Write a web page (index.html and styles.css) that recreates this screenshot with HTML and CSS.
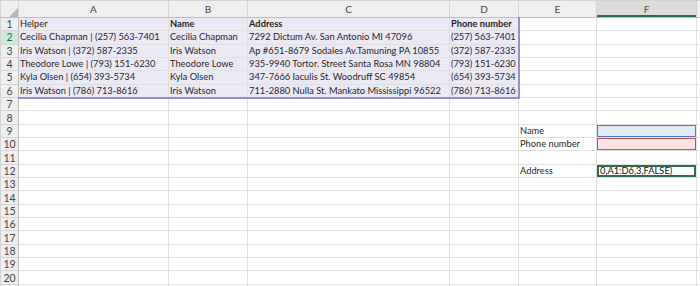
FILE: index.html
```html
<!DOCTYPE html>
<html lang="en">

<head>
    <meta charset="UTF-8">
    <title>Lookup sheet</title>
    <link rel="stylesheet" href="styles.css">
</head>

<body>
    <table class="sheet">
        <colgroup>
            <col class="col-hd">
            <col class="col-a">
            <col class="col-b">
            <col class="col-c">
            <col class="col-d">
            <col class="col-e">
            <col class="col-f">
            <col class="col-g">
        </colgroup>
        <thead>
            <tr>
                <th class="corner"><svg width="10" height="10" viewBox="0 0 10 10"><polygon points="10,1 10,10 1,10" fill="#b9b9b9"/></svg></th>
                <th>A</th>
                <th>B</th>
                <th>C</th>
                <th>D</th>
                <th>E</th>
                <th class="sel">F</th>
                <th></th>
            </tr>
        </thead>
        <tbody>
            <tr>
                <th>1</th>
                <td class="ref">Helper</td>
                <td class="ref bold">Name</td>
                <td class="ref bold">Address</td>
                <td class="ref bold edge-r">Phone number</td>
                <td></td><td></td><td></td>
            </tr>
            <tr>
                <th class="sel">2</th>
                <td class="ref">Cecilia Chapman | (257) 563-7401</td>
                <td class="ref">Cecilia Chapman</td>
                <td class="ref">7292 Dictum Av. San Antonio MI 47096</td>
                <td class="ref edge-r">(257) 563-7401</td>
                <td></td><td></td><td></td>
            </tr>
            <tr>
                <th>3</th>
                <td class="ref">Iris Watson | (372) 587-2335</td>
                <td class="ref">Iris Watson</td>
                <td class="ref">Ap #651-8679 Sodales Av.Tamuning PA 10855</td>
                <td class="ref edge-r">(372) 587-2335</td>
                <td></td><td></td><td></td>
            </tr>
            <tr>
                <th>4</th>
                <td class="ref">Theodore Lowe | (793) 151-6230</td>
                <td class="ref">Theodore Lowe</td>
                <td class="ref">935-9940 Tortor. Street Santa Rosa MN 98804</td>
                <td class="ref edge-r">(793) 151-6230</td>
                <td></td><td></td><td></td>
            </tr>
            <tr>
                <th>5</th>
                <td class="ref">Kyla Olsen | (654) 393-5734</td>
                <td class="ref">Kyla Olsen</td>
                <td class="ref">347-7666 Iaculis St. Woodruff SC 49854</td>
                <td class="ref edge-r">(654) 393-5734</td>
                <td></td><td></td><td></td>
            </tr>
            <tr>
                <th>6</th>
                <td class="ref edge-b">Iris Watson | (786) 713-8616</td>
                <td class="ref edge-b">Iris Watson</td>
                <td class="ref edge-b">711-2880 Nulla St. Mankato Mississippi 96522</td>
                <td class="ref edge-b edge-r">(786) 713-8616</td>
                <td></td><td></td><td></td>
            </tr>
            <tr><th>7</th><td></td><td></td><td></td><td></td><td></td><td></td><td></td></tr>
            <tr><th>8</th><td></td><td></td><td></td><td></td><td></td><td></td><td></td></tr>
            <tr>
                <th>9</th>
                <td></td><td></td><td></td><td></td>
                <td>Name</td>
                <td class="pick-blue"></td>
                <td></td>
            </tr>
            <tr>
                <th>10</th>
                <td></td><td></td><td></td><td></td>
                <td>Phone number</td>
                <td class="pick-red"></td>
                <td></td>
            </tr>
            <tr><th>11</th><td></td><td></td><td></td><td></td><td></td><td></td><td></td></tr>
            <tr>
                <th>12</th>
                <td></td><td></td><td></td><td></td>
                <td>Address</td>
                <td class="active">0,A1:D6,3,FALSE)</td>
                <td></td>
            </tr>
            <tr><th>13</th><td></td><td></td><td></td><td></td><td></td><td></td><td></td></tr>
            <tr><th>14</th><td></td><td></td><td></td><td></td><td></td><td></td><td></td></tr>
            <tr><th>15</th><td></td><td></td><td></td><td></td><td></td><td></td><td></td></tr>
            <tr><th>16</th><td></td><td></td><td></td><td></td><td></td><td></td><td></td></tr>
            <tr><th>17</th><td></td><td></td><td></td><td></td><td></td><td></td><td></td></tr>
            <tr><th>18</th><td></td><td></td><td></td><td></td><td></td><td></td><td></td></tr>
            <tr><th>19</th><td></td><td></td><td></td><td></td><td></td><td></td><td></td></tr>
            <tr><th>20</th><td></td><td></td><td></td><td></td><td></td><td></td><td></td></tr>
            <tr><th></th><td></td><td></td><td></td><td></td><td></td><td></td><td></td></tr>
        </tbody>
    </table>
</body>

</html>
```

FILE: styles.css
```css
body {
    margin: 0;
    background: #fff;
    overflow: hidden;
    font-family: Lato, "Liberation Sans", sans-serif;
    font-size: 9.3px;
    color: #1f1f1f;
}

.sheet {
    border-collapse: collapse;
    table-layout: fixed;
    width: 726px;
}

.col-hd { width: 18px; }
.col-a { width: 150px; }
.col-b { width: 79px; }
.col-c { width: 202px; }
.col-d { width: 69px; }
.col-e { width: 78px; }
.col-f { width: 100px; }
.col-g { width: 30px; }

.sheet th,
.sheet td {
    border: 1px solid #e0e0e0;
    padding: 0 1px;
    white-space: nowrap;
    overflow: hidden;
    line-height: 12px;
    vertical-align: middle;
}

.sheet tbody tr {
    height: 13.33px;
}

.sheet thead th {
    height: 16px;
    background: #efefef;
    border-color: #d4d4d4;
    border-bottom-color: #bebebe;
    font-weight: normal;
    font-size: 10px;
    color: #444;
    text-align: center;
}

.sheet tbody th {
    background: #efefef;
    border-color: #d4d4d4;
    border-right-color: #bebebe;
    font-weight: normal;
    color: #444;
    text-align: center;
    font-size: 10.5px;
}

.sheet thead th.corner {
    padding: 0;
    vertical-align: bottom;
}

.corner svg {
    display: block;
    margin-left: auto;
}

.sheet thead th.sel {
    background: #dcdcdc;
    color: #1e6e42;
    box-shadow: inset 0 -2px 0 #217346;
}

.sheet tbody th.sel {
    background: #cfe9da;
    color: #1e6e42;
}

.ref {
    background: #ece9f6;
}

.bold {
    font-weight: bold;
}

.sheet td.edge-r {
    border-right: 2px solid #9d8bc8;
}

.sheet td.edge-b {
    border-bottom: 2px solid #9d8bc8;
}

.pick-blue {
    background: #dfe9f7;
    box-shadow: inset 0 0 0 1px #4f78c0;
}

.pick-red {
    background: #fbe3e3;
    box-shadow: inset 0 0 0 1px #c0504d;
}

.sheet td.active {
    box-shadow: inset 0 0 0 2px #2b6b48;
    padding-left: 3px;
    color: #111;
}
```
